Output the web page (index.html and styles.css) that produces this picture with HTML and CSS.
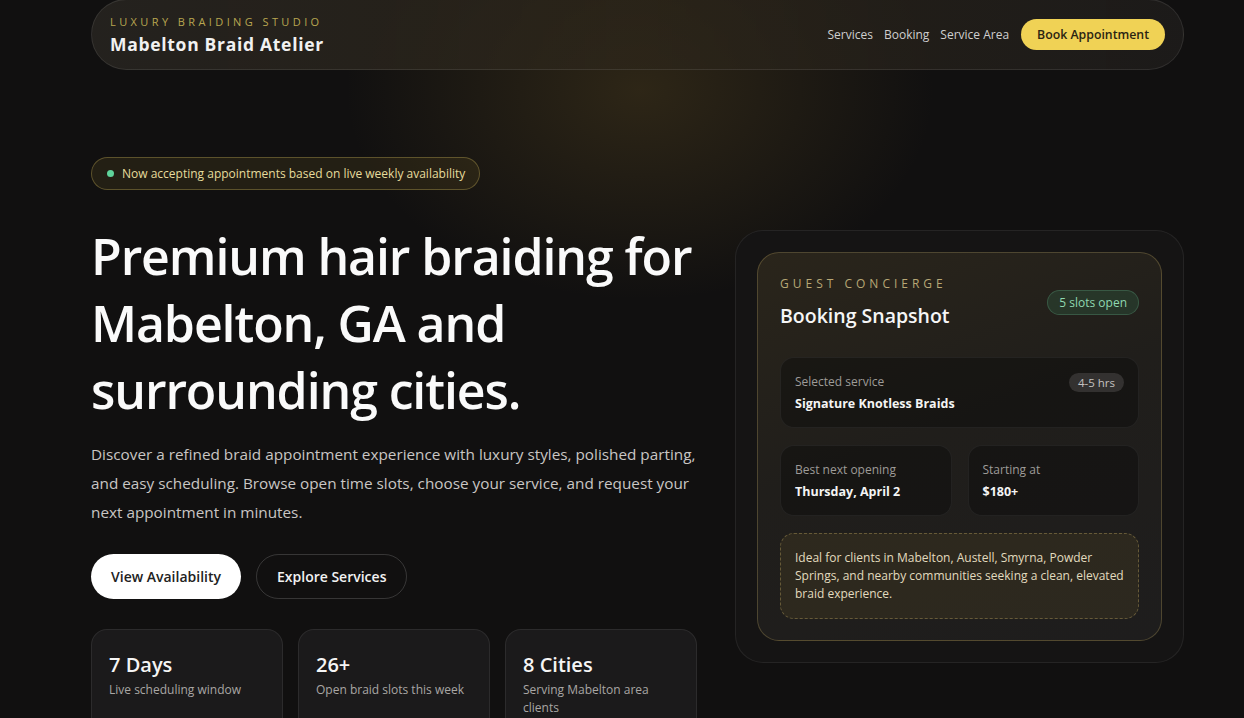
FILE: index.html
```html
<!DOCTYPE html>
<html lang="en">
<head>
<meta charset="UTF-8" />
<meta name="viewport" content="width=device-width, initial-scale=1" />
<title>Mabelton Braid Atelier</title>
<link rel="stylesheet" href="styles.css">
</head>
<body>
  <div class="page">
    <header class="nav">
      <div class="brand">
        <span class="brand-kicker">Luxury Braiding Studio</span>
        <span class="brand-name">Mabelton Braid Atelier</span>
      </div>
      <nav class="nav-links">
        <a href="#services">Services</a>
        <a href="#booking">Booking</a>
        <a href="#area">Service Area</a>
        <a href="#booking" class="nav-cta">Book Appointment</a>
      </nav>
    </header>

    <section class="hero">
      <div class="hero-copy">
        <div class="live-badge"><span class="dot"></span>Now accepting appointments based on live weekly availability</div>
        <h1>Premium hair braiding for Mabelton, GA and surrounding cities.</h1>
        <p class="lead">Discover a refined braid appointment experience with luxury styles, polished parting, and easy scheduling. Browse open time slots, choose your service, and request your next appointment in minutes.</p>
        <div class="hero-actions">
          <a href="#booking" class="btn btn-light">View Availability</a>
          <a href="#services" class="btn btn-ghost">Explore Services</a>
        </div>
        <div class="stats">
          <div class="stat">
            <strong>7 Days</strong>
            <span>Live scheduling window</span>
          </div>
          <div class="stat">
            <strong>26+</strong>
            <span>Open braid slots this week</span>
          </div>
          <div class="stat">
            <strong>8 Cities</strong>
            <span>Serving Mabelton area clients</span>
          </div>
        </div>
      </div>

      <aside class="panel">
        <div class="snapshot">
          <div class="snap-head">
            <div>
              <span class="snap-kicker">Guest Concierge</span>
              <h2>Booking Snapshot</h2>
            </div>
            <span class="slots-pill">5 slots open</span>
          </div>

          <div class="info-box service-box">
            <div>
              <span class="info-label">Selected service</span>
              <span class="info-value">Signature Knotless Braids</span>
            </div>
            <span class="hrs-pill">4-5 hrs</span>
          </div>

          <div class="info-grid">
            <div class="info-box">
              <span class="info-label">Best next opening</span>
              <span class="info-value">Thursday, April 2</span>
            </div>
            <div class="info-box">
              <span class="info-label">Starting at</span>
              <span class="info-value">$180+</span>
            </div>
          </div>

          <div class="note">Ideal for clients in Mabelton, Austell, Smyrna, Powder Springs, and nearby communities seeking a clean, elevated braid experience.</div>
        </div>
      </aside>
    </section>
  </div>
</body>
</html>
```

FILE: styles.css
```css
* {
  box-sizing: border-box;
}
body {
  margin: 0;
  font-family: 'Open Sans', 'Noto Sans', sans-serif;
  color: #fff;
  background:
    radial-gradient(ellipse 420px 300px at 640px 90px, rgba(120, 95, 40, 0.28), rgba(0,0,0,0) 70%),
    #111010;
  min-height: 718px;
  overflow: hidden;
}
a {
  text-decoration: none;
  color: inherit;
}
.page {
  width: 1093px;
  margin-left: 91px;
}

/* header */
.nav {
  height: 71px;
  margin-top: -1px;
  padding: 0 18px;
  display: flex;
  align-items: center;
  justify-content: space-between;
  border-radius: 36px;
  border: 1px solid rgba(255,255,255,0.09);
  background: linear-gradient(90deg, rgba(40,37,33,0.85), rgba(45,38,26,0.75) 50%, rgba(30,28,27,0.9));
}
.brand {
  display: flex;
  flex-direction: column;
  gap: 3px;
}
.brand-kicker {
  font-size: 11px;
  letter-spacing: 3.4px;
  text-transform: uppercase;
  color: #b8a650;
}
.brand-name {
  font-size: 17.5px;
  font-weight: 700;
  letter-spacing: 0.7px;
  color: #f1f1f1;
}
.nav-links {
  display: flex;
  align-items: center;
  gap: 11px;
  font-size: 12px;
  color: #cfcfcf;
}
.nav-cta {
  margin-left: 1px;
  padding: 7px 16px;
  border-radius: 20px;
  background: #f0d255;
  color: #2a2412;
  font-weight: 600;
  font-size: 12.3px;
}

/* hero */
.hero {
  display: flex;
  justify-content: space-between;
  align-items: flex-start;
  padding-top: 86px;
}
.hero-copy {
  width: 620px;
}
.live-badge {
  display: inline-flex;
  align-items: center;
  gap: 8px;
  height: 33px;
  margin-top: 1px;
  padding: 0 14px 0 15px;
  border-radius: 17px;
  border: 1px solid rgba(180,160,80,0.4);
  background: rgba(90,75,30,0.25);
  color: #e6dc9c;
  font-size: 12px;
}
.dot {
  width: 7px;
  height: 7px;
  border-radius: 50%;
  background: #5fd39b;
}
h1 {
  margin: 33px 0 0;
  font-size: 50px;
  line-height: 67px;
  font-weight: 600;
  letter-spacing: -1.1px;
  color: #fafafa;
}
.lead {
  margin: 16px 0 0;
  width: 606px;
  font-size: 15.3px;
  line-height: 29px;
  color: #c9c6c4;
}
.hero-actions {
  display: flex;
  gap: 15px;
  margin-top: 27px;
}
.btn {
  display: inline-flex;
  align-items: center;
  height: 45px;
  padding: 0 20px;
  border-radius: 23px;
  font-size: 14px;
  font-weight: 600;
}
.btn-light {
  background: #fff;
  color: #222;
}
.btn-ghost {
  border: 1px solid rgba(255,255,255,0.16);
  color: #f2f2f2;
}
.stats {
  display: grid;
  grid-template-columns: repeat(3, 192px);
  gap: 15px;
  margin-top: 30px;
}
.stat {
  height: 130px;
  padding: 21px 17px;
  border-radius: 16px;
  border: 1px solid rgba(255,255,255,0.08);
  background: #1b1a1b;
  display: flex;
  flex-direction: column;
}
.stat strong {
  font-size: 20px;
  font-weight: 600;
  color: #f5f5f5;
}
.stat span {
  margin-top: 3px;
  font-size: 12px;
  line-height: 18px;
  color: #a9a6a4;
}

/* booking panel */
.panel {
  width: 449px;
  margin-top: 74px;
  padding: 21px;
  border-radius: 28px;
  border: 1px solid rgba(255,255,255,0.07);
  background: #151414;
}
.snapshot {
  padding: 22px 22px 21px;
  border-radius: 22px;
  border: 1px solid rgba(190,165,95,0.3);
  background: linear-gradient(160deg, #2a251b 0%, #201e1b 45%, #1e1d1d 100%);
}
.snap-head {
  display: flex;
  justify-content: space-between;
  align-items: flex-start;
}
.snap-kicker {
  display: block;
  font-size: 12px;
  letter-spacing: 4px;
  text-transform: uppercase;
  color: #b7a775;
}
.snapshot h2 {
  margin: 10px 0 0;
  font-size: 19.5px;
  font-weight: 600;
  color: #f6f6f6;
}
.slots-pill {
  margin-top: 15px;
  padding: 3px 11px;
  border-radius: 14px;
  border: 1px solid rgba(100,180,140,0.28);
  background: rgba(50,110,80,0.28);
  color: #8fd8b0;
  font-size: 12px;
}
.info-box {
  padding: 15px 14px;
  border-radius: 14px;
  border: 1px solid rgba(255,255,255,0.06);
  background: rgba(12,11,11,0.45);
}
.service-box {
  margin-top: 28px;
  display: flex;
  justify-content: space-between;
  align-items: flex-start;
}
.info-label {
  display: block;
  font-size: 12px;
  color: #9e9b98;
}
.info-value {
  display: block;
  margin-top: 5px;
  font-size: 12.5px;
  font-weight: 700;
  color: #f4f4f4;
}
.hrs-pill {
  padding: 2px 9px;
  border-radius: 11px;
  background: #333130;
  color: #c4c2c0;
  font-size: 11.5px;
}
.info-grid {
  display: grid;
  grid-template-columns: 1fr 1fr;
  gap: 16px;
  margin-top: 17px;
}
.note {
  margin-top: 17px;
  padding: 15px 14px;
  border-radius: 14px;
  border: 1px dashed rgba(190,165,95,0.4);
  background: rgba(95,80,40,0.22);
  color: #e2dbbf;
  font-size: 12px;
  line-height: 18px;
}
```
